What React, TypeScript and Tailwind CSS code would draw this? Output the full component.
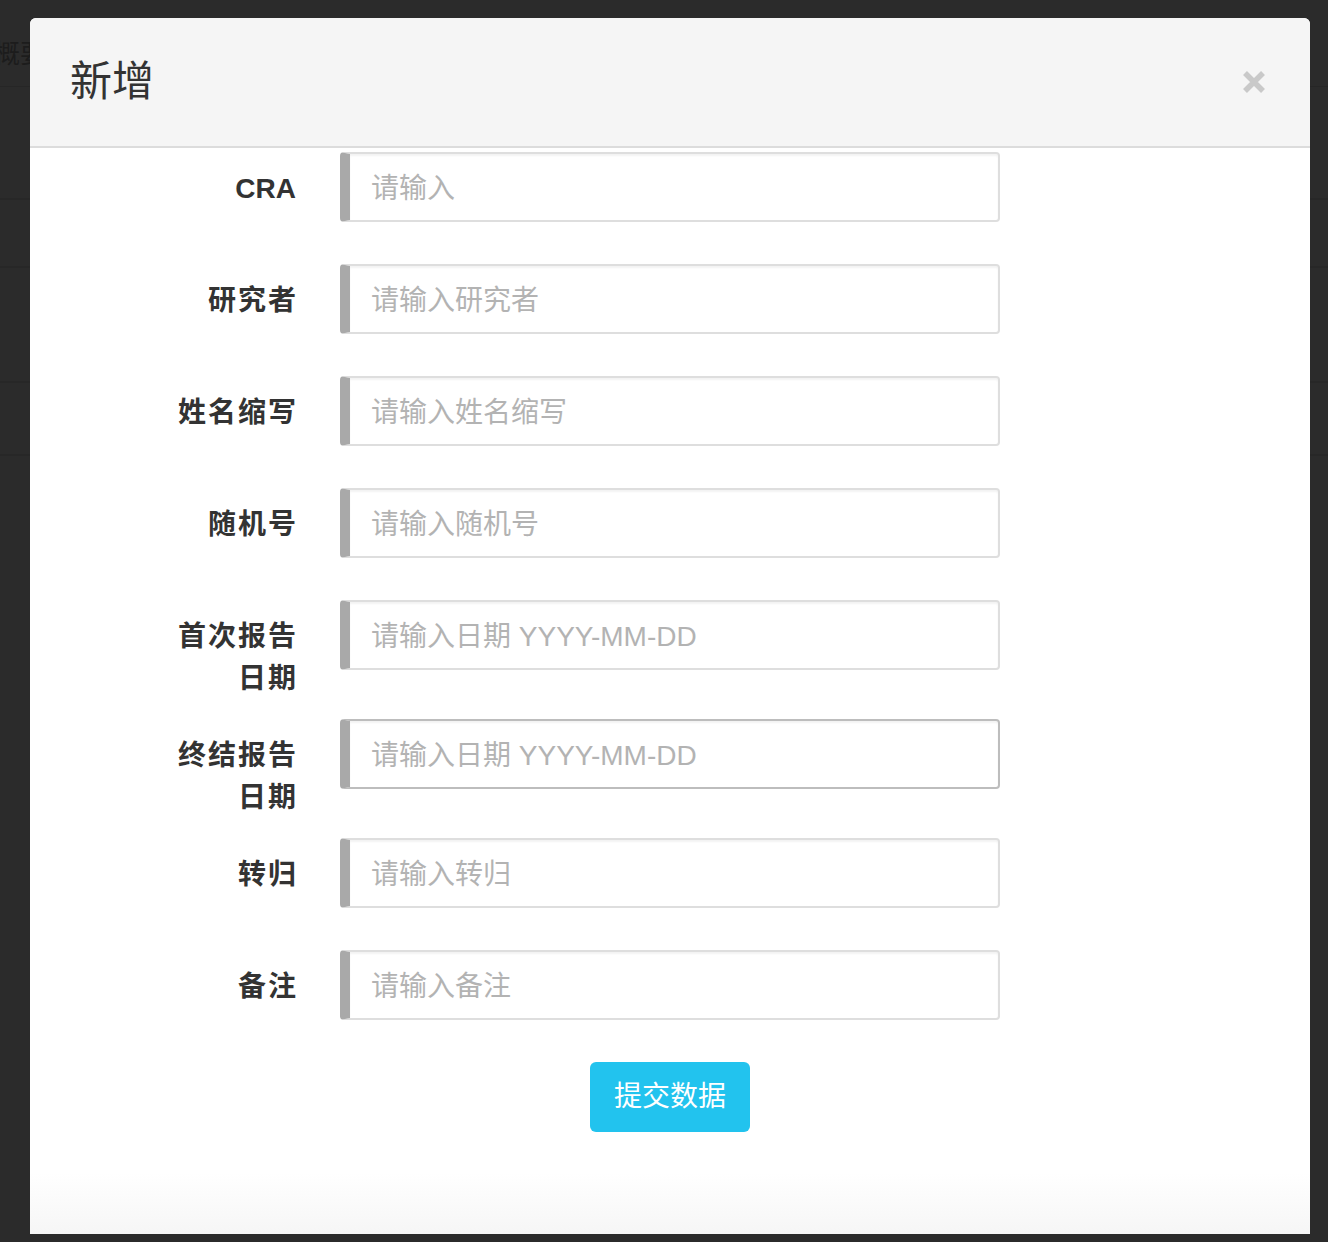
import React from 'react';

type Field = {
  label: string[];
  placeholder: string;
  active?: boolean;
};

const fields: Field[] = [
  { label: ['CRA'], placeholder: '请输入' },
  { label: ['研究者'], placeholder: '请输入研究者' },
  { label: ['姓名缩写'], placeholder: '请输入姓名缩写' },
  { label: ['随机号'], placeholder: '请输入随机号' },
  { label: ['首次报告', '日期'], placeholder: '请输入日期 YYYY-MM-DD' },
  { label: ['终结报告', '日期'], placeholder: '请输入日期 YYYY-MM-DD', active: true },
  { label: ['转归'], placeholder: '请输入转归' },
  { label: ['备注'], placeholder: '请输入备注' },
];

const font = { fontFamily: '"Liberation Sans", "Noto Sans CJK SC", sans-serif' };

function FormRow({ field, last }: { field: Field; last: boolean }) {
  const twoLines = field.label.length > 1;
  const latin = /^[A-Za-z]+$/.test(field.label[0]);
  return (
    <div className={`flex items-start ${last ? 'h-[70px]' : twoLines ? 'h-[119px]' : 'h-[112px]'}`}>
      <label
        className={`w-[268px] shrink-0 pt-[16px] text-right text-[28px] leading-[42px] font-bold text-[#333] ${
          latin ? 'pr-[2px] tracking-normal' : 'tracking-[2px]'
        }`}
      >
        {field.label.map(line => (
          <div key={line}>{line}</div>
        ))}
      </label>
      <input
        placeholder={field.placeholder}
        className={`ml-[42px] h-[70px] w-[660px] rounded-[4px] border-2 border-l-[10px] border-l-[#a9a9a9] bg-white pl-[21px] pt-[3px] text-[28px] text-[#555] outline-none shadow-[inset_0_2px_2px_rgba(0,0,0,0.05)] placeholder:text-[#b3b3b3]
          ${field.active ? 'border-[#bdbdbd]' : 'border-[#dedede]'}`}
      />
    </div>
  );
}

export default function App() {
  return (
    <div className="relative h-[1242px] w-[1328px] overflow-hidden bg-[#2b2b2b]" style={font}>
      {/* page behind the overlay */}
      <div className="flex flex-col">
        <div className="h-[87px] border-b border-[#262626] pt-[36px] text-[26px] leading-[36px] text-[#1c1c1c]">
          <span className="-ml-[6px]">概要</span>
        </div>
        <div className="h-[113px] border-b-2 border-[#272727]" />
        <div className="h-[68px] border-b-2 border-[#272727]" />
        <div className="h-[115px] border-b-2 border-[#272727]" />
        <div className="h-[73px] border-b-2 border-[#272727]" />
      </div>

      {/* modal */}
      <div className="absolute left-[30px] top-[18px] flex h-[1216px] w-[1280px] flex-col rounded-t-[6px] bg-gradient-to-b from-white from-[95%] to-[#f6f6f6]">
        <div className="flex h-[130px] shrink-0 items-center justify-between rounded-t-[6px] border-b-2 border-[#dcdcdc] bg-[#f5f5f5] pl-[40px] pr-[44px]">
          <h3 className="text-[42px] font-normal leading-none text-[#333]">新增</h3>
          <button className="flex h-[24px] w-[24px] items-center justify-center">
            <svg width="24" height="24" viewBox="0 0 24 24">
              <path d="M3 3 L21 21 M21 3 L3 21" stroke="#c9c9c9" strokeWidth="5.5" />
            </svg>
          </button>
        </div>

        <form className="flex flex-col pt-[4px]">
          {fields.map((f, i) => (
            <FormRow key={i} field={f} last={i === fields.length - 1} />
          ))}
          <div className="mt-[42px] flex pl-[310px]">
            <div className="flex w-[660px] justify-center">
              <button
                type="button"
                className="h-[70px] w-[160px] rounded-[6px] bg-[#22c3ee] text-[28px] text-white"
              >
                提交数据
              </button>
            </div>
          </div>
        </form>
      </div>
    </div>
  );
}
